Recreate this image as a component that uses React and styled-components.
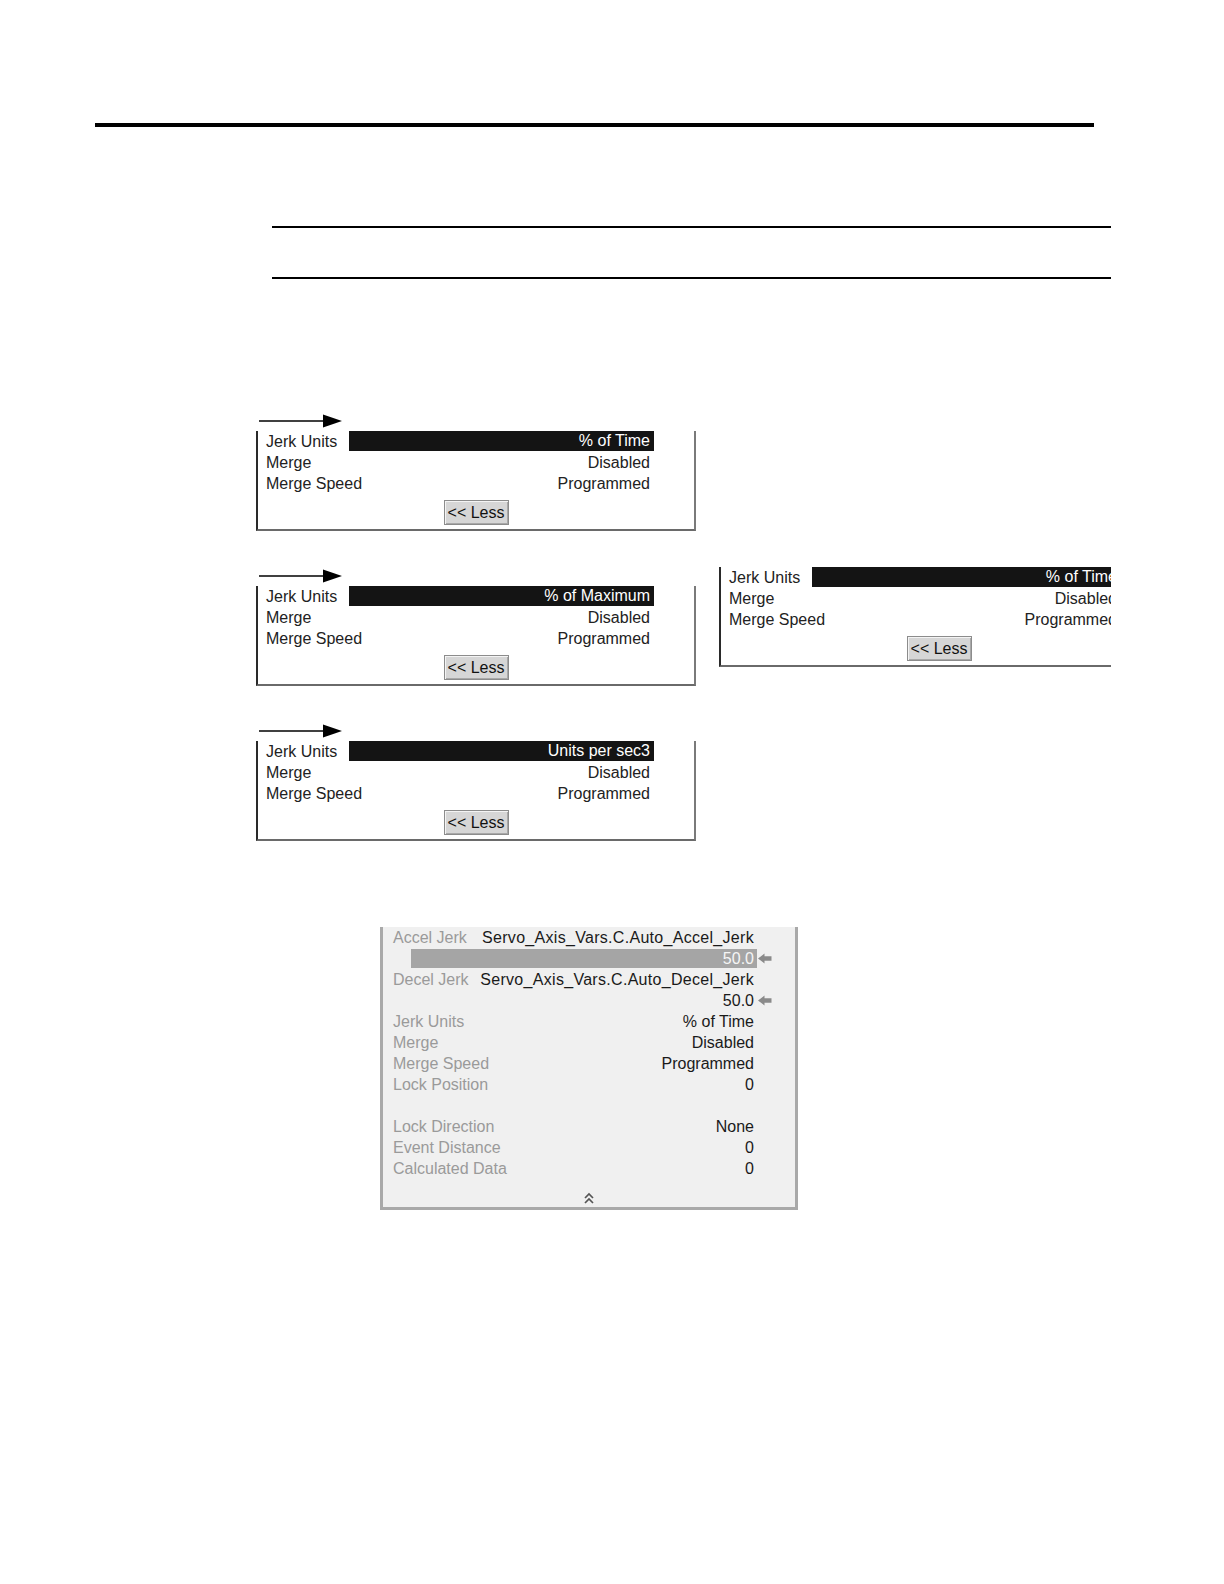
import React from "react";
import styled, { createGlobalStyle } from "styled-components";

const Global = createGlobalStyle`
  html, body { margin: 0; padding: 0; background: #ffffff; }
  body { font-family: "Liberation Sans", Arial, sans-serif; }
`;

const Page = styled.div`
  width: 1224px;
  min-height: 1584px;
  padding-top: 123px;
  box-sizing: border-box;
  background: #fff;
  overflow: hidden;
`;

const TopRule = styled.div`
  margin-left: 95px;
  width: 999px;
  height: 4px;
  background: #000;
`;

const NoteRules = styled.div`
  margin-left: 272px;
  margin-top: 99px;
  width: 839px;
  height: 49px;
  border-top: 2px solid #000;
  border-bottom: 2px solid #000;
`;

const Figures = styled.div`
  margin-top: 135px;
  margin-left: 256px;
  display: grid;
  grid-template-columns: 440px 392px;
  column-gap: 23px;
  row-gap: 38px;
  align-items: start;
`;

const Group = styled.div`
  grid-column: 1;
  display: flex;
  flex-direction: column;
`;

const ArrowSvg = styled.svg`
  display: block;
  width: 90px;
  height: 17px;
`;

const Panel = styled.div`
  width: ${(p) => p.$width}px;
  height: 100px;
  box-sizing: border-box;
  border-left: 2px solid #2a2a2a;
  border-right: 2px solid #7a7a7a;
  border-bottom: 2px solid #6a6a6a;
  background: #fff;
  display: flex;
  flex-direction: column;
  padding-left: 8px;
  font-size: 16px;
  color: #222;
  flex-shrink: 0;
`;

const Row = styled.div`
  height: 21px;
  display: flex;
  align-items: center;
`;

const Label = styled.div`
  width: 83px;
  white-space: nowrap;
  line-height: 21px;
`;

const Value = styled.div`
  width: ${(p) => p.$width}px;
  box-sizing: border-box;
  padding-right: 4px;
  text-align: right;
  white-space: nowrap;
  height: ${(p) => (p.$selected ? "20px" : "21px")};
  line-height: ${(p) => (p.$selected ? "20px" : "21px")};
  align-self: flex-start;
  background: ${(p) => (p.$selected ? "#141414" : "transparent")};
  color: ${(p) => (p.$selected ? "#ffffff" : "#222")};
`;

const ButtonRow = styled.div`
  margin-top: 6px;
  width: 436px;
  display: flex;
  justify-content: center;
  margin-left: -8px;
`;

const LessButton = styled.button`
  width: 65px;
  height: 25px;
  padding: 0;
  font-family: "Liberation Sans", Arial, sans-serif;
  font-size: 16px;
  color: #111;
  background: #d6d6d6;
  border: 1px solid #8c8c8c;
  box-shadow: inset 1px 1px 0 #f4f4f4, inset -1px -1px 0 #a8a8a8;
  line-height: 22px;
`;

const ClipFrame = styled.div`
  grid-column: 2;
  grid-row: 2;
  width: 392px;
  margin-top: -2px;
  overflow: hidden;
`;

const BigPanel = styled.div`
  margin-top: 86px;
  margin-left: 380px;
  width: 418px;
  box-sizing: border-box;
  background: #f0f0f0;
  border-left: 3px solid #a9a9a9;
  border-right: 3px solid #a9a9a9;
  border-bottom: 3px solid #a9a9a9;
  padding: 0 22px 0 10px;
  font-size: 16px;
`;

const BigRow = styled.div`
  height: 21px;
  display: grid;
  grid-template-columns: 1fr 16px;
  align-items: center;
`;

const BigCell = styled.div`
  display: flex;
  justify-content: space-between;
  align-items: center;
  white-space: nowrap;
  height: 21px;
  padding-left: ${(p) => (p.$indent ? "18px" : "0")};
`;

const GrayLabel = styled.span`
  color: #9a9a9a;
`;

const DarkValue = styled.span`
  color: #1a1a1a;
  padding-right: 3px;
  letter-spacing: ${(p) => (p.$wide ? "0.3px" : "0")};
`;

const ValueBar = styled.div`
  flex: 1;
  height: 19px;
  line-height: 19px;
  text-align: right;
  padding-right: 3px;
  background: ${(p) => (p.$filled ? "#a5a5a5" : "transparent")};
  color: ${(p) => (p.$filled ? "#f5f5f5" : "#1a1a1a")};
`;

const IconCell = styled.div`
  display: flex;
  align-items: center;
  height: 21px;
  padding-left: 1px;
`;

const Footer = styled.div`
  height: 28px;
  display: flex;
  justify-content: center;
  align-items: flex-end;
  padding-bottom: 2px;
  box-sizing: border-box;
  margin-right: -12px;
`;

const PointerArrow = () => (
  <ArrowSvg viewBox="0 0 90 17">
    <line x1="3" y1="7" x2="70" y2="7" stroke="#000" strokeWidth="1.6" />
    <polygon points="67,0.5 86,7 67,13.5" fill="#000" />
  </ArrowSvg>
);

const BackArrow = () => (
  <svg width="14" height="11" viewBox="0 0 14 11">
    <polygon points="0,5.5 6.5,0.5 6.5,3.3 13.5,3.3 13.5,7.7 6.5,7.7 6.5,10.5" fill="#8a8a8a" />
  </svg>
);

const DoubleUp = () => (
  <svg width="12" height="13" viewBox="0 0 12 13">
    <polyline points="2,6 6,2 10,6" fill="none" stroke="#555" strokeWidth="1.7" />
    <polyline points="2,11 6,7 10,11" fill="none" stroke="#555" strokeWidth="1.7" />
  </svg>
);

const JerkPanel = ({ unit, width = 440 }) => {
  const valueWidth = width - 135;
  return (
    <Panel $width={width}>
      <Row>
        <Label>Jerk Units</Label>
        <Value $selected $width={valueWidth}>
          {unit}
        </Value>
      </Row>
      <Row>
        <Label>Merge</Label>
        <Value $width={valueWidth}>Disabled</Value>
      </Row>
      <Row>
        <Label>Merge Speed</Label>
        <Value $width={valueWidth}>Programmed</Value>
      </Row>
      <ButtonRow>
        <LessButton>&lt;&lt; Less</LessButton>
      </ButtonRow>
    </Panel>
  );
};

const bigRows = [
  { label: "Jerk Units", value: "% of Time" },
  { label: "Merge", value: "Disabled" },
  { label: "Merge Speed", value: "Programmed" },
  { label: "Lock Position", value: "0" },
  { blank: true },
  { label: "Lock Direction", value: "None" },
  { label: "Event Distance", value: "0" },
  { label: "Calculated Data", value: "0" },
];

export default function App() {
  return (
    <Page>
      <Global />
      <TopRule />
      <NoteRules />
      <Figures>
        <Group>
          <PointerArrow />
          <JerkPanel unit="% of Time" />
        </Group>
        <Group>
          <PointerArrow />
          <JerkPanel unit="% of Maximum" />
        </Group>
        <ClipFrame>
          <JerkPanel unit="% of Time" width={444} />
        </ClipFrame>
        <Group>
          <PointerArrow />
          <JerkPanel unit="Units per sec3" />
        </Group>
      </Figures>
      <BigPanel>
        <BigRow>
          <BigCell>
            <GrayLabel>Accel Jerk</GrayLabel>
            <DarkValue $wide>Servo_Axis_Vars.C.Auto_Accel_Jerk</DarkValue>
          </BigCell>
          <IconCell />
        </BigRow>
        <BigRow>
          <BigCell $indent>
            <ValueBar $filled>50.0</ValueBar>
          </BigCell>
          <IconCell>
            <BackArrow />
          </IconCell>
        </BigRow>
        <BigRow>
          <BigCell>
            <GrayLabel>Decel Jerk</GrayLabel>
            <DarkValue $wide>Servo_Axis_Vars.C.Auto_Decel_Jerk</DarkValue>
          </BigCell>
          <IconCell />
        </BigRow>
        <BigRow>
          <BigCell $indent>
            <ValueBar>50.0</ValueBar>
          </BigCell>
          <IconCell>
            <BackArrow />
          </IconCell>
        </BigRow>
        {bigRows.map((r, i) => (
          <BigRow key={i}>
            <BigCell>
              {!r.blank && <GrayLabel>{r.label}</GrayLabel>}
              {!r.blank && <DarkValue>{r.value}</DarkValue>}
            </BigCell>
            <IconCell />
          </BigRow>
        ))}
        <Footer>
          <DoubleUp />
        </Footer>
      </BigPanel>
    </Page>
  );
}
